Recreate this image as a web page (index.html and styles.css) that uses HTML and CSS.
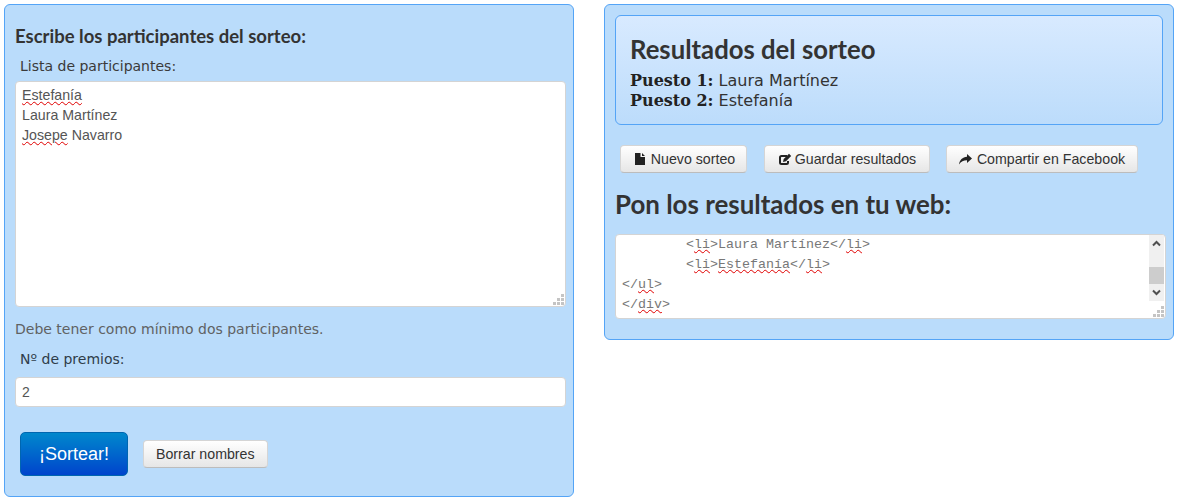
FILE: index.html
```html
<!DOCTYPE html>
<html lang="es">
<head>
<meta charset="utf-8">
<title>Sorteo</title>
<link rel="stylesheet" href="styles.css">
</head>
<body>
<main class="page">
  <section class="panel panel-left">
    <h3 class="form-title">Escribe los participantes del sorteo:</h3>
    <label class="label label-list">Lista de participantes:</label>
    <div class="field field-list">
      <div class="names"><span class="typo">Estefanía</span>
Laura Martínez
<span class="typo">Josepe</span> Navarro</div>
      <svg class="grip" width="11" height="11" viewBox="0 0 11 11"><g fill="#c4c4c4"><rect x="8" y="0" width="3" height="3"/><rect x="4" y="4" width="3" height="3"/><rect x="8" y="4" width="3" height="3"/><rect x="0" y="8" width="3" height="3"/><rect x="4" y="8" width="3" height="3"/><rect x="8" y="8" width="3" height="3"/></g></svg>
    </div>
    <p class="hint">Debe tener como mínimo dos participantes.</p>
    <label class="label label-num">Nº de premios:</label>
    <div class="field field-num">2</div>
    <div class="actions">
      <button class="btn-primary">¡Sortear!</button>
      <button class="btn">Borrar nombres</button>
    </div>
  </section>
  <section class="panel panel-right">
    <div class="result">
      <h2 class="result-title">Resultados del sorteo</h2>
      <p class="result-line"><b>Puesto 1:</b> Laura Martínez</p>
      <p class="result-line"><b>Puesto 2:</b> Estefanía</p>
    </div>
    <div class="share">
      <button class="btn btn-new">
        <svg width="10" height="12" viewBox="0 0 10 12"><path fill="#222" d="M0 0h5.500v4H10v8H0zM7 0l3 3H7z"/></svg>
        <span>Nuevo sorteo</span></button>
      <button class="btn btn-save">
        <svg width="14" height="13" viewBox="0 0 14 13"><path fill="none" stroke="#222" stroke-width="2" d="M9 3H3.500A1.500 1.500 0 0 0 2 4.500v5A1.500 1.500 0 0 0 3.500 11h5A1.500 1.500 0 0 0 10 9.500V8"/><path fill="#222" d="M5 9l.7-3L11 .8l2.200 2.200L8 8.300z"/></svg>
        <span>Guardar resultados</span></button>
      <button class="btn btn-share">
        <svg width="13" height="11" viewBox="0 0 13 11"><path fill="#222" d="M8 0l5 4.500L8 9V6.300C4.500 6.300 2 7.500 0 10.500 .5 6 3.500 3 8 2.700z"/></svg>
        <span>Compartir en Facebook</span></button>
    </div>
    <h2 class="embed-title">Pon los resultados en tu web:</h2>
    <div class="field field-code">
      <div class="code">        &lt;<span class="typo">li</span>&gt;Laura Martínez&lt;/<span class="typo">li</span>&gt;
        &lt;<span class="typo">li</span>&gt;<span class="typo">Estefanía</span>&lt;/<span class="typo">li</span>&gt;
&lt;/<span class="typo">ul</span>&gt;
&lt;/<span class="typo">div</span>&gt;</div>
      <div class="scrollbar">
        <svg class="arrow" width="15" height="17" viewBox="0 0 15 17"><path fill="none" stroke="#505050" stroke-width="2" d="M4 10.500l3.500-3.500 3.500 3.500"/></svg>
        <div class="track"><div class="thumb"></div></div>
        <svg class="arrow" width="15" height="17" viewBox="0 0 15 17"><path fill="none" stroke="#505050" stroke-width="2" d="M4 6.500l3.500 3.500 3.500-3.500"/></svg>
      </div>
      <svg class="grip" width="11" height="11" viewBox="0 0 11 11"><g fill="#c4c4c4"><rect x="8" y="0" width="3" height="3"/><rect x="4" y="4" width="3" height="3"/><rect x="8" y="4" width="3" height="3"/><rect x="0" y="8" width="3" height="3"/><rect x="4" y="8" width="3" height="3"/><rect x="8" y="8" width="3" height="3"/></g></svg>
    </div>
  </section>
</main>
</body>
</html>
```
FILE: styles.css
```css
* { box-sizing: border-box; }
html, body { margin: 0; padding: 0; background: #fff; }
body { color: #333; font-family: "DejaVu Sans", Verdana, sans-serif; }
.page { display: flex; align-items: flex-start; gap: 30px; padding: 4px; }
.panel {
  width: 570px;
  background: #badcfb;
  border: 1px solid #54a4f6;
  border-radius: 6px;
  padding: 10px;
}
.panel-left { height: 493px; }
.panel-right { height: 336px; }
.form-title {
  margin: 11px 0 0;
  font: bold 18.500px/20px Lato, sans-serif;
  color: #333;
}
.label { display: block; font-size: 14px; line-height: 18px; padding-left: 5px; color: #3a3a3a; }
.label-list { margin-top: 11px; }
.label-num { margin-top: 12px; color: #2f3d4a; }
.field {
  position: relative;
  background: #fff;
  border-radius: 4px;
  border: 1px solid #d4d4d4;
  font-family: "Liberation Sans", Arial, sans-serif;
  color: #555;
}
.field-list { width: 551px; height: 226px; margin-top: 6px; }
.names { padding: 3px 6px; font-size: 14.200px; line-height: 20px; white-space: pre; }
.typo { text-decoration: underline wavy #e00000 1px; text-underline-offset: 1px; }
.hint { margin: 13px 0 0; font-size: 14px; line-height: 18px; color: #5f6263; }
.field-num { width: 551px; height: 30px; margin-top: 9px; padding: 0 6px; font-size: 14px; line-height: 28px; }
.actions { display: flex; align-items: center; gap: 15px; margin: 25px 0 0 5px; }
.btn-primary {
  width: 108px;
  height: 44px;
  padding: 0;
  border: 1px solid #0066b0;
  border-radius: 5px;
  background: linear-gradient(#0088cc, #0044cc);
  color: #fff;
  font: 18px "Liberation Sans", Arial, sans-serif;
}
.btn {
  display: inline-flex;
  align-items: center;
  justify-content: center;
  height: 28px;
  padding: 0 12px;
  border: 1px solid #d5d5d5;
  border-bottom-color: #bcbcbc;
  border-radius: 4px;
  background: linear-gradient(#ffffff, #e6e6e6);
  color: #333;
  font: 14.200px "Liberation Sans", Arial, sans-serif;
  white-space: nowrap;
}
.result {
  height: 110px;
  border: 1px solid #54a4f6;
  border-radius: 6px;
  background: linear-gradient(#d8eaff, #bcdcfb);
  padding: 19px 14px 0;
}
.result-title { margin: 0 0 7px; font: bold 25.700px/29px Lato, sans-serif; color: #333; }
.result-line { margin: 0; font-size: 16px; line-height: 20px; color: #333; }
.result-line b { font-family: "DejaVu Serif", serif; font-size: 16px; color: #222; }
.share { display: flex; gap: 16px; margin: 20px 0 0 5px; }
.share .btn { padding: 0; }
.share .btn-new { width: 127px; margin-right: 1px; padding-left: 3px; gap: 6px; }
.share .btn-save { width: 166px; gap: 3px; }
.share .btn-share { width: 192px; gap: 5px; }
.embed-title { margin: 15px 0 0; font: bold 25.900px/32px Lato, sans-serif; color: #333; }
.field-code { width: 551px; height: 85px; margin-top: 14px; overflow: hidden; }
.code {
  padding: 0 6px;
  font: 13.330px/20px "Liberation Mono", "Courier New", monospace;
  color: #777;
  white-space: pre;
}
.scrollbar {
  position: absolute;
  top: 0;
  right: 1px;
  width: 15px;
  height: 66px;
  background: #f0f0f0;
  display: flex;
  flex-direction: column;
}
.arrow { flex: none; display: block; }
.track { flex: 1; padding-top: 15px; }
.thumb { height: 17px; background: #cdcdcd; }
.grip { position: absolute; right: 1px; bottom: 1px; }
```
